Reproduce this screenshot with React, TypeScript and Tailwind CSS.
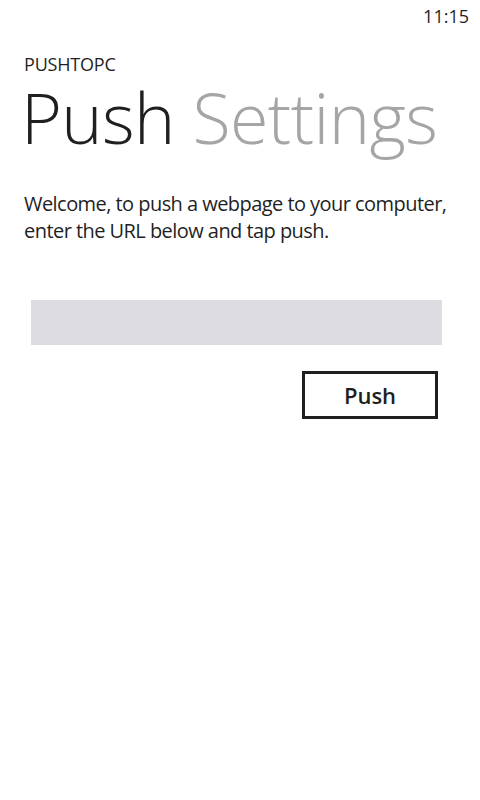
import React from 'react';

const font = { fontFamily: '"Open Sans", "Noto Sans", sans-serif' };

export default function App() {
  return (
    <div className="w-[480px] h-[800px] bg-white text-[#1f1f1f]" style={font}>
      {/* status bar */}
      <div className="flex justify-end pr-[11px] pt-[4px] h-[32px]">
        <span className="text-[18px] leading-[24px]">11:15</span>
      </div>

      <div className="px-6">
        <div className="mt-[20px] text-[18px] leading-[24px] tracking-[-0.2px]">PUSHTOPC</div>
        <h1 className="mt-[6px] ml-[-3px] text-[70px] leading-[70px] font-light tracking-[-0.6px] whitespace-nowrap">
          Push <span className="text-[#a5a5a5]">Settings</span>
        </h1>

        <p className="mt-[38px] text-[20px] leading-[27px] tracking-[-0.55px]">
          Welcome, to push a webpage to your computer, enter the URL below and tap push.
        </p>

        <div className="mt-[56px] ml-[7px] w-[411px] h-[45px] bg-[#dddce0]" />

        <div className="flex justify-end mt-[26px] pr-[18px]">
          <button className="w-[136px] h-[48px] border-[3px] border-[#1f1f1f] text-[22px] font-semibold leading-none">
            Push
          </button>
        </div>
      </div>
    </div>
  );
}
